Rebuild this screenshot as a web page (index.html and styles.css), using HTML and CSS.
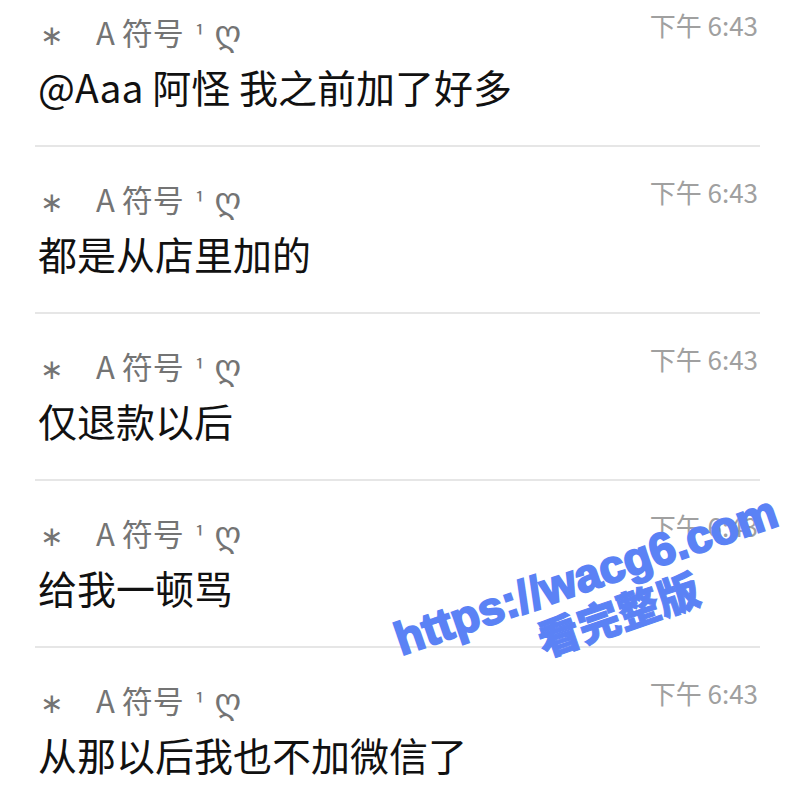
FILE: index.html
```html
<!DOCTYPE html>
<html lang="zh-CN">
  <head>
    <meta charset="UTF-8" />
    <meta name="viewport" content="width=device-width, initial-scale=1.0" />
    <title>群聊</title>
    <link rel="stylesheet" href="styles.css">
  </head>
  <body>
    <div class="chat">
      <div class="msg">
        <div class="msg-head">
          <span class="name"><span class="star">∗</span>A 符号 <span class="sup">¹</span> <span class="geo">ღ</span></span>
          <span class="time">下午 6:43</span>
        </div>
        <div class="msg-text">@Aaa 阿怪 我之前加了好多</div>
      </div>
      <div class="msg">
        <div class="msg-head">
          <span class="name"><span class="star">∗</span>A 符号 <span class="sup">¹</span> <span class="geo">ღ</span></span>
          <span class="time">下午 6:43</span>
        </div>
        <div class="msg-text">都是从店里加的</div>
      </div>
      <div class="msg">
        <div class="msg-head">
          <span class="name"><span class="star">∗</span>A 符号 <span class="sup">¹</span> <span class="geo">ღ</span></span>
          <span class="time">下午 6:43</span>
        </div>
        <div class="msg-text">仅退款以后</div>
      </div>
      <div class="msg">
        <div class="msg-head">
          <span class="name"><span class="star">∗</span>A 符号 <span class="sup">¹</span> <span class="geo">ღ</span></span>
          <span class="time">下午 6:43</span>
        </div>
        <div class="msg-text">给我一顿骂</div>
      </div>
      <div class="msg">
        <div class="msg-head">
          <span class="name"><span class="star">∗</span>A 符号 <span class="sup">¹</span> <span class="geo">ღ</span></span>
          <span class="time">下午 6:43</span>
        </div>
        <div class="msg-text">从那以后我也不加微信了</div>
      </div>
    </div>

    <div class="watermark">
      <div class="wm-url">https://wacg6.com</div>
      <div class="wm-cn">看完整版</div>
    </div>
  </body>
</html>
```

FILE: styles.css
```css
body {
  font-family: "Noto Sans CJK SC", "Noto Sans", sans-serif;
  background-color: #fff;
  color: #111;
  margin: 0;
  height: 802px;
  overflow: hidden;
  position: relative;
}
.chat {
  margin-top: -20px;
}
.msg {
  margin: 0 40px 0 35px;
  padding: 32px 2px 33px 3px;
  border-bottom: 2px solid #e6e6e6;
}
.msg:last-child {
  border-bottom: none;
}
.msg-head {
  display: flex;
  justify-content: space-between;
  align-items: flex-start;
  height: 40px;
}
.name {
  font-size: 31px;
  line-height: 40px;
  color: #747474;
}
.star {
  font-family: "DejaVu Sans", sans-serif;
  font-size: 28px;
  display: inline-block;
  width: 56px;
  padding-left: 2px;
}
.sup {
  font-size: 24px;
  margin-left: 4px;
}
.geo {
  font-family: "DejaVu Sans", sans-serif;
  font-size: 34px;
  margin-left: 3px;
}
.time {
  font-size: 26px;
  line-height: 26px;
  color: #a0a0a0;
}
.msg-text {
  font-size: 39px;
  line-height: 52px;
  margin-top: 8px;
}
.watermark {
  position: absolute;
  left: 383px;
  top: 550px;
  width: 420px;
  color: #5b82f5;
  font-weight: 900;
  text-align: center;
  transform: rotate(-19deg);
}
.wm-url {
  font-family: "Liberation Sans", "Noto Sans CJK SC", sans-serif;
  font-size: 46px;
  line-height: 48px;
  font-weight: bold;
  -webkit-text-stroke: 2px #5b82f5;
}
.wm-cn {
  font-size: 42px;
  line-height: 44px;
  padding-left: 36px;
  -webkit-text-stroke: 1px #5b82f5;
}
```
